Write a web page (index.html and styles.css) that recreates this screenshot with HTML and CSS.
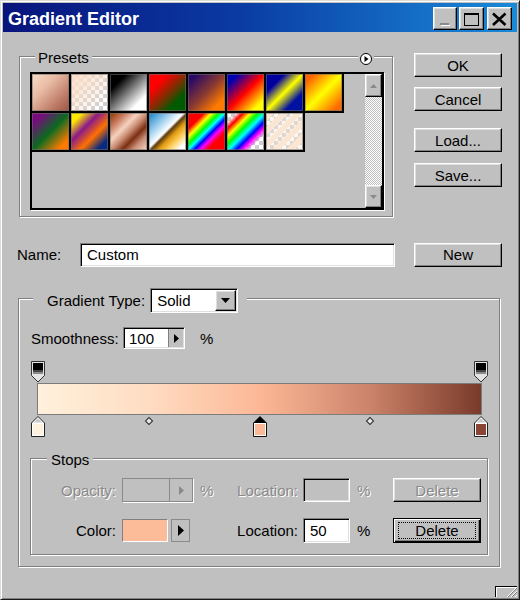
FILE: index.html
```html
<!DOCTYPE html>
<html>
<head>
<meta charset="utf-8">
<title>Gradient Editor</title>
<link rel="stylesheet" href="styles.css">
</head>
<body>
<div class="window">
  <div class="titlebar">
    <span class="title">Gradient Editor</span>
    <div class="caption-btns">
      <span class="cap-btn raised cap-min"><svg width="22" height="21" viewBox="0 0 22 21"><rect x="6" y="15" width="9" height="2" fill="#8a8a8a"/><rect x="7" y="17" width="9" height="1" fill="#fff"/></svg></span>
      <span class="cap-btn raised cap-max"><svg width="23" height="21" viewBox="0 0 23 21"><rect x="4.5" y="5.5" width="14" height="12" fill="none" stroke="#000"/><rect x="4" y="5" width="15" height="2" fill="#000"/></svg></span>
      <span class="cap-btn raised cap-close"><svg width="23" height="21" viewBox="0 0 23 21"><path d="M5 5.5L17.5 17M17.5 5.5L5 17" stroke="#000" stroke-width="2.6"/></svg></span>
    </div>
  </div>

  <div class="client">
    <div class="top-row">
      <div class="group presets">
        <div class="group-head presets-head">
          <span class="legend">Presets</span>
          <span class="menu-btn"><svg width="12" height="12" viewBox="0 0 12 12"><circle cx="6" cy="6" r="5.5" fill="#fff" stroke="#000"/><path d="M4.5 3L8.5 6L4.5 9Z" fill="#000"/></svg></span>
        </div>
        <div class="listbox">
          <div class="swatches">
            <span class="sw p1"></span>
            <span class="sw p2"></span>
            <span class="sw p3"></span>
            <span class="sw p4"></span>
            <span class="sw p5"></span>
            <span class="sw p6"></span>
            <span class="sw p7"></span>
            <span class="sw p8"></span>
            <span class="sw p9"></span>
            <span class="sw p10"></span>
            <span class="sw p11"></span>
            <span class="sw p12"></span>
            <span class="sw p13"></span>
            <span class="sw p14"></span>
            <span class="sw p15"></span>
          </div>
          <div class="scrollbar">
            <span class="sb-btn raised"><svg width="9" height="6" viewBox="0 0 9 6"><path d="M4.5 1L8 5H1Z" fill="#8a8a8a"/></svg></span>
            <span class="sb-track"></span>
            <span class="sb-btn raised"><svg width="9" height="6" viewBox="0 0 9 6"><path d="M1 1H8L4.5 5Z" fill="#8a8a8a"/></svg></span>
          </div>
        </div>
      </div>
      <div class="btn-col">
        <div class="btn raised">OK</div>
        <div class="btn raised btn-cancel">Cancel</div>
        <div class="btn raised btn-load">Load...</div>
        <div class="btn raised btn-save">Save...</div>
      </div>
    </div>

    <div class="name-row">
      <span class="name-label">Name:</span>
      <div class="field name-input">Custom</div>
      <div class="btn raised btn-new">New</div>
    </div>

    <div class="group gtype">
      <div class="group-head gt-head">
        <span class="legend gt-legend">Gradient Type:</span>
        <div class="field select">
          <span class="select-text">Solid</span>
          <span class="select-btn raised"><svg width="9" height="5" viewBox="0 0 9 5"><path d="M0 0H9L4.5 5Z" fill="#000"/></svg></span>
        </div>
      </div>

      <div class="smooth-row">
        <span class="smooth-label">Smoothness:</span>
        <div class="field spin">
          <span class="spin-val">100</span>
          <span class="spin-arrow"><svg width="5" height="9" viewBox="0 0 5 9"><path d="M0 0L5 4.5L0 9Z" fill="#000"/></svg></span>
        </div>
        <span class="pct">%</span>
      </div>

      <div class="grad-editor">
        <div class="stop-row">
          <svg class="stop" style="left:0%" width="14" height="22" viewBox="0 0 14 22"><path d="M0.5 0.5H13.5V14.5L7 21L0.5 14.5Z" fill="#e4e4e4" stroke="#333"/><rect x="2" y="2" width="10" height="7" fill="#000"/><rect x="2" y="9" width="10" height="2" fill="#444"/><rect x="2" y="11" width="10" height="2" fill="#8a8a8a"/></svg>
          <svg class="stop" style="left:100%" width="14" height="22" viewBox="0 0 14 22"><path d="M0.5 0.5H13.5V14.5L7 21L0.5 14.5Z" fill="#e4e4e4" stroke="#333"/><rect x="2" y="2" width="10" height="7" fill="#000"/><rect x="2" y="9" width="10" height="2" fill="#444"/><rect x="2" y="11" width="10" height="2" fill="#8a8a8a"/></svg>
        </div>
        <div class="bar"></div>
        <div class="stop-row bottom-row">
          <svg class="stop" style="left:0%" width="14" height="21" viewBox="0 0 14 21"><path d="M7 0.5L13.5 7V20.5H0.5V7Z" fill="#fff" stroke="#222"/><path d="M7 2.2L11.2 6.5H2.8Z" fill="#c8c8c8"/><rect x="2" y="8" width="10" height="11" fill="#fff1dc"/></svg>
          <span class="diamond" style="left:25%"></span>
          <svg class="stop" style="left:50%" width="14" height="21" viewBox="0 0 14 21"><path d="M7 0.5L13.5 7V20.5H0.5V7Z" fill="#fff" stroke="#111"/><path d="M7 0.5L13.5 7H0.5Z" fill="#000"/><rect x="2" y="8" width="10" height="11" fill="#fcb997"/></svg>
          <span class="diamond" style="left:75%"></span>
          <svg class="stop" style="left:100%" width="14" height="21" viewBox="0 0 14 21"><path d="M7 0.5L13.5 7V20.5H0.5V7Z" fill="#fff" stroke="#222"/><path d="M7 2.2L11.2 6.5H2.8Z" fill="#c8c8c8"/><rect x="2" y="8" width="10" height="11" fill="#8a4433"/></svg>
        </div>
      </div>

      <div class="group stops">
        <div class="group-head stops-head">
          <span class="legend stops-legend">Stops</span>
        </div>
        <div class="stops-grid">
          <span class="lbl-r disabled">Opacity:</span>
          <div class="field-dis op-field">
            <span class="op-val"></span>
            <span class="op-arrow"><svg width="5" height="9" viewBox="0 0 5 9"><path d="M0 0L5 4.5L0 9Z" fill="#8a8a8a"/></svg></span>
          </div>
          <span class="pct-c disabled">%</span>
          <span class="lbl-r2 disabled">Location:</span>
          <div class="field loc-dis"></div>
          <span class="pct-c disabled">%</span>
          <div class="btn raised btn-del disabled">Delete</div>

          <span class="lbl-r">Color:</span>
          <div class="color-pair">
            <span class="color-sw"></span>
            <span class="color-arrow"><svg width="6" height="11" viewBox="0 0 6 11"><path d="M0 0L6 5.5L0 11Z" fill="#000"/></svg></span>
          </div>
          <span></span>
          <span class="lbl-r2">Location:</span>
          <div class="field loc-field">50</div>
          <span class="pct-c">%</span>
          <div class="btn-default"><span class="focus">Delete</span></div>
        </div>
      </div>
    </div>

    <div class="footer">
      <span class="grip"><svg width="14" height="10" viewBox="0 0 14 10"><path d="M4 10L14 0M8 10L14 4M12 10L14 8" stroke="#fff" stroke-width="1"/><path d="M5 10L14 1M9 10L14 5" stroke="#808080" stroke-width="1"/></svg></span>
    </div>
  </div>
</div>
</body>
</html>
```

FILE: styles.css
```css
* { box-sizing: border-box; }

body {
  margin: 0;
  background: #c0c0c0;
  font-family: "Liberation Sans", Arial, sans-serif;
  font-size: 15px;
  color: #000;
}

.window {
  width: 520px;
  height: 600px;
  background: #c0c0c0;
  border: 1px solid;
  border-color: #dcdcdc #1a1a1a #1a1a1a #dcdcdc;
  padding: 2px;
  box-shadow: inset 1px 1px #fff, inset -1px -1px #808080;
  overflow: hidden;
}

/* title bar */
.titlebar {
  height: 29px;
  display: flex;
  align-items: flex-start;
  padding: 0 5px;
  background: linear-gradient(90deg, #08147c 0%, #0a3aa2 45%, #1a8ad8 100%);
}
.title {
  color: #fff;
  font-weight: bold;
  font-size: 18px;
  line-height: 29px;
  padding-top: 2px;
}
.caption-btns {
  margin-left: auto;
  display: flex;
  padding-top: 4px;
}
.cap-btn { width: 24px; height: 23px; display: block; }
.cap-max { width: 25px; margin-left: 2px; }
.cap-close { width: 25px; margin-left: 3px; }
.cap-btn svg { display: block; }

/* generic 3D */
.raised {
  background: #c0c0c0;
  border: 1px solid;
  border-color: #fff #000 #000 #fff;
  box-shadow: inset -1px -1px #808080, inset 1px 1px #dfdfdf;
}
.field {
  background: #fff;
  border: 1px solid;
  border-color: #808080 #fff #fff #808080;
  box-shadow: inset 1px 1px #000, inset -1px -1px #dfdfdf;
}
.disabled {
  color: #8a8a8a;
  text-shadow: 1px 1px 0 #fff;
}

.client { padding: 21px 0 0 14px; }

.top-row { display: flex; align-items: flex-start; }

.group {
  border: 1px solid #808080;
  box-shadow: inset 1px 1px #fff, 1px 1px #fff;
}
.group-head { display: flex; align-items: flex-start; }
.legend { background: #c0c0c0; line-height: 17px; }

/* presets */
.presets {
  margin: 3px 0 0 2px;
  width: 374px;
  padding: 0 8px 6px 10px;
}
.presets-head { margin-top: -8px; justify-content: space-between; }
.presets-head .legend { margin-left: 5px; padding: 0 3px; }
.menu-btn {
  display: block;
  background: #c0c0c0;
  padding: 0 2px;
  height: 12px;
  margin: 4px 10px 0 0;
}
.menu-btn svg { display: block; }

.listbox {
  margin-top: 6px;
  height: 138px;
  border: 2px solid #000;
  box-shadow: 1px 1px #fff;
  display: flex;
}
.swatches {
  flex: 1;
  display: grid;
  grid-template-columns: repeat(8, 39px);
  grid-auto-rows: 39px;
  align-content: start;
}
.sw {
  display: block;
  border-right: 2px solid #000;
  border-bottom: 2px solid #000;
  box-shadow: inset 0 0 0 1px rgba(110, 110, 110, 0.55);
}
.p1 { background: linear-gradient(135deg, #f8dcc8 0%, #e9bba4 35%, #bb7964 75%, #9c5545 100%); }
.p2 {
  background: linear-gradient(135deg, #fbdfca 0%, rgba(251, 223, 202, 0.7) 35%, rgba(251, 223, 202, 0) 85%),
    conic-gradient(#cfcfcf 25%, #fff 0 50%, #cfcfcf 0 75%, #fff 0) 0 0 / 8px 8px;
}
.p3 { background: linear-gradient(135deg, #000 22%, #fff 78%); }
.p4 { background: linear-gradient(135deg, #ff0000 25%, #8a2a00 50%, #005a00 75%); }
.p5 { background: linear-gradient(135deg, #290a66 12%, #8a3a30 50%, #ff7a00 82%); }
.p6 { background: linear-gradient(135deg, #0000b4 15%, #ff0000 50%, #ffff00 85%); }
.p7 { background: linear-gradient(135deg, #0000a0 25%, #ffff00 50%, #0010a0 75%); }
.p8 { background: linear-gradient(135deg, #ff6400 12%, #ffff00 50%, #ff6a00 88%); }
.p9 { background: linear-gradient(135deg, #7a0a80 15%, #0a6a20 50%, #ff7a00 85%); }
.p10 { background: linear-gradient(135deg, #ffe800 15%, #8a1a8a 38%, #ff7000 62%, #082a80 85%); }
.p11 { background: linear-gradient(135deg, #9a4510 5%, #c7785a 20%, #f5d2c0 38%, #c98a70 52%, #7a2e12 66%, #c98d76 80%, #f6d6c6 100%); }
.p12 { background: linear-gradient(135deg, #2a8ed0 5%, #bfe0f5 35%, #fff 47%, #5a3a10 52%, #e09a10 62%, #ffd060 75%, #fff 90%); }
.p13 { background: linear-gradient(135deg, #f00 22%, #ff0 32%, #0f0 42%, #0ff 50%, #00f 58%, #f0f 66%, #f00 76%); }
.p14 {
  background: linear-gradient(135deg, rgba(255,0,0,0) 12%, #f00 22%, #ff0 32%, #0f0 42%, #0ff 52%, #00f 62%, #f0f 70%, rgba(255,0,255,0) 80%),
    conic-gradient(#cfcfcf 25%, #fff 0 50%, #cfcfcf 0 75%, #fff 0) 0 0 / 8px 8px;
}
.p15 {
  background: repeating-linear-gradient(135deg, #fbe6d3 0 6px, rgba(251, 230, 211, 0.35) 6px 10px),
    conic-gradient(#cfcfcf 25%, #fff 0 50%, #cfcfcf 0 75%, #fff 0) 0 0 / 8px 8px;
}

.scrollbar { width: 17px; display: flex; flex-direction: column; }
.sb-btn {
  height: 23px;
  display: flex;
  align-items: center;
  justify-content: center;
}
.sb-btn svg { display: block; }
.sb-track {
  flex: 1;
  background: conic-gradient(#fff 25%, #c0c0c0 0 50%, #fff 0 75%, #c0c0c0 0) 0 0 / 2px 2px;
}

/* right buttons */
.btn-col {
  margin-left: 21px;
  width: 88px;
  display: flex;
  flex-direction: column;
}
.btn {
  height: 24px;
  display: flex;
  align-items: center;
  justify-content: center;
}
.btn-cancel { margin-top: 10px; }
.btn-load { margin-top: 17px; }
.btn-save { margin-top: 11px; }

/* name */
.name-row {
  display: flex;
  align-items: center;
  height: 25px;
  margin-top: 25px;
}
.name-label { width: 63px; }
.name-input {
  width: 315px;
  height: 24px;
  padding-left: 6px;
  display: flex;
  align-items: center;
}
.btn-new { width: 88px; margin-left: 19px; }

/* gradient type group */
.gtype {
  margin: 31px 0 0 1px;
  width: 482px;
  padding: 0 11px 11px 11px;
}
.gt-head {
  margin: -11px 0 0 3px;
  padding: 0 9px 0 14px;
  background: #c0c0c0;
  width: fit-content;
  height: 25px;
  align-items: center;
}
.gt-legend { margin-right: 5px; }
.select {
  width: 88px;
  height: 25px;
  padding: 1px;
  display: flex;
  align-items: center;
}
.select-text { flex: 1; padding-left: 5px; }
.select-btn {
  width: 21px;
  height: 21px;
  display: flex;
  align-items: center;
  justify-content: center;
}
.select-btn svg { display: block; }

.smooth-row {
  display: flex;
  align-items: center;
  height: 22px;
  margin-top: 14px;
}
.smooth-label { width: 92px; margin-left: 1px; }
.spin {
  width: 62px;
  height: 22px;
  padding: 1px;
  display: flex;
}
.spin-val { flex: 1; padding-left: 4px; line-height: 20px; }
.spin-arrow {
  width: 15px;
  border-left: 1px solid #808080;
  background: #c0c0c0;
  display: flex;
  align-items: center;
  justify-content: center;
}
.spin-arrow svg { display: block; }
.pct { margin-left: 15px; }

/* gradient editor */
.grad-editor { margin: 12px 6px 0 7px; }
.stop-row {
  position: relative;
  height: 22px;
  margin: 0 1px;
}
.stop {
  position: absolute;
  top: 0;
  transform: translateX(-50%);
  display: block;
}
.bottom-row .stop { top: 1px; }
.bar {
  height: 32px;
  border: 1px solid #7c7c7c;
  background: linear-gradient(90deg, #fff1dc 0%, #ffdcc2 25%, #fcb896 50%, #cb836a 75%, #7a3a2a 100%);
}
.diamond {
  position: absolute;
  top: 3px;
  width: 6px;
  height: 6px;
  border: 1px solid #222;
  background: #e6e6e6;
  transform: translateX(-50%) rotate(45deg);
}

/* stops group */
.stops {
  margin-top: 21px;
  padding: 0 0 11px 0;
}
.stops-head { margin-top: -8px; }
.stops-legend { margin-left: 16px; padding: 0 4px; }
.stops-grid {
  display: grid;
  grid-template-columns: 91px 71px 37px 73px 47px 43px 88px;
  grid-template-rows: 24px 25px;
  row-gap: 16px;
  margin-top: 10px;
  align-items: center;
}
.lbl-r { text-align: right; padding-right: 6px; }
.lbl-r2 { text-align: right; padding-right: 5px; }
.pct-c { padding-left: 7px; }

.field-dis {
  background: #c0c0c0;
  border: 1px solid #8a8a8a;
  box-shadow: 1px 1px #fff;
}
.op-field {
  height: 24px;
  display: flex;
}
.op-val { flex: 1; }
.op-arrow {
  width: 23px;
  border-left: 1px solid #8a8a8a;
  display: flex;
  align-items: center;
  justify-content: center;
}
.op-arrow svg { display: block; }
.loc-dis {
  height: 24px;
  background: #c0c0c0;
}
.loc-field {
  height: 25px;
  padding-left: 6px;
  display: flex;
  align-items: center;
}
.btn-del { height: 24px; }

.color-pair { display: flex; height: 23px; }
.color-sw {
  width: 46px;
  height: 23px;
  background: #fcbb99;
  border: 1px solid;
  border-color: #808080 #fff #fff #808080;
}
.color-arrow {
  width: 19px;
  height: 23px;
  margin-left: 3px;
  border: 1px solid #8a8a8a;
  display: flex;
  align-items: center;
  justify-content: center;
}
.color-arrow svg { display: block; }

.btn-default {
  height: 25px;
  display: flex;
  padding: 3px 4px;
  background: #c0c0c0;
  border: 1px solid #000;
  box-shadow: inset 1px 1px #fff, inset -1px -1px #000, inset -2px -2px #808080;
}
.focus {
  flex: 1;
  border: 1px dotted #000;
  display: flex;
  align-items: center;
  justify-content: center;
}

/* footer grip */
.footer {
  display: flex;
  justify-content: flex-end;
  margin-top: 19px;
}
.grip {
  width: 22px;
  height: 11px;
  border-top: 1px solid #000;
  border-left: 1px solid #000;
  box-shadow: inset 1px 1px #fff;
  display: flex;
  align-items: flex-end;
  justify-content: flex-end;
}
.grip svg { display: block; }
```
